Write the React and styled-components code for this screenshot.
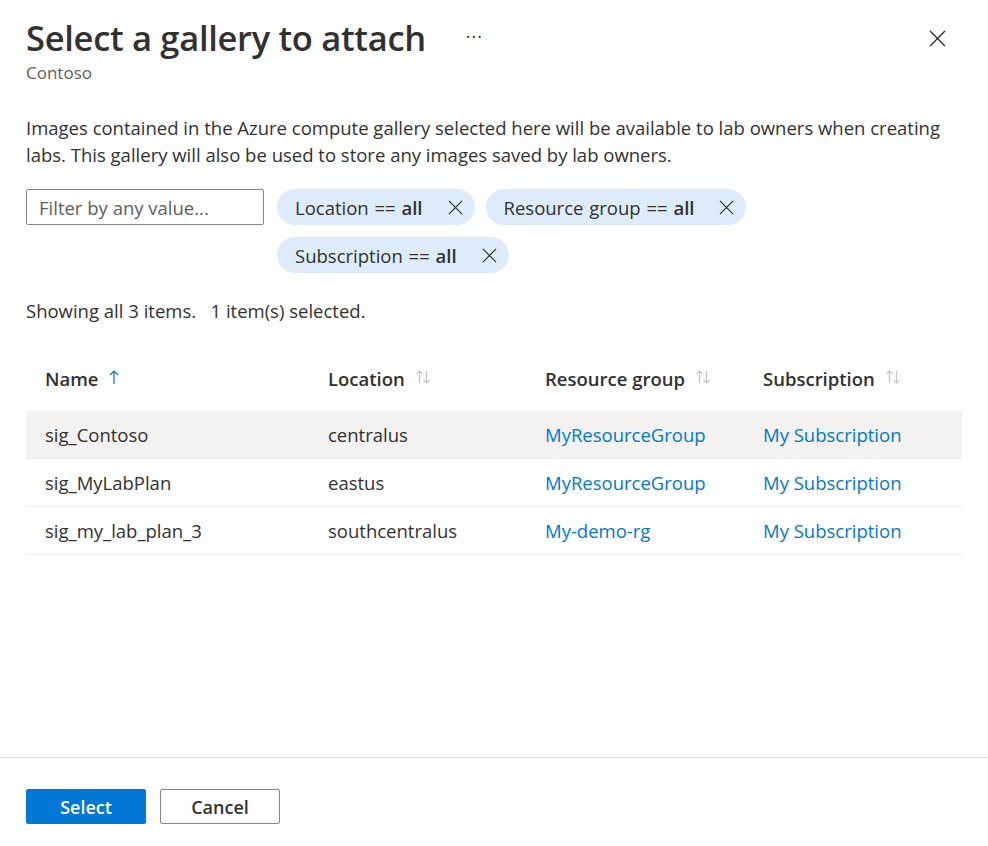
import React from 'react';
import styled, { createGlobalStyle } from 'styled-components';

const GlobalStyle = createGlobalStyle`
	html, body {
		margin: 0;
		padding: 0;
		background: #ffffff;
	}
	body {
		font-family: 'Open Sans', 'Noto Sans', sans-serif;
		color: #323130;
	}
	* {
		box-sizing: border-box;
	}
`;

const filters = [
	{ label: 'Location', value: 'all' },
	{ label: 'Resource group', value: 'all' },
	{ label: 'Subscription', value: 'all' },
];

const columns = [
	{ key: 'name', title: 'Name', sorted: true },
	{ key: 'location', title: 'Location' },
	{ key: 'group', title: 'Resource group' },
	{ key: 'sub', title: 'Subscription' },
];

const rows = [
	{ name: 'sig_Contoso', location: 'centralus', group: 'MyResourceGroup', sub: 'My Subscription', selected: true },
	{ name: 'sig_MyLabPlan', location: 'eastus', group: 'MyResourceGroup', sub: 'My Subscription' },
	{ name: 'sig_my_lab_plan_3', location: 'southcentralus', group: 'My-demo-rg', sub: 'My Subscription' },
];

const CloseIcon = ({ size = 16 }) => (
	<svg width={size} height={size} viewBox='0 0 16 16' fill='none'>
		<path d='M1 1L15 15M15 1L1 15' stroke='currentColor' strokeWidth='1.3' />
	</svg>
);

const SortUp = () => (
	<svg width='10' height='16' viewBox='0 0 10 16' fill='none'>
		<path d='M5 15V2M1 6L5 2L9 6' stroke='#0078d4' strokeWidth='1.2' />
	</svg>
);

const SortBoth = () => (
	<svg width='16' height='16' viewBox='0 0 16 16' fill='none'>
		<path d='M4.5 14V2M1.5 5L4.5 2L7.5 5' stroke='#c8c6c4' strokeWidth='1.2' />
		<path d='M11.5 2V14M8.5 11L11.5 14L14.5 11' stroke='#c8c6c4' strokeWidth='1.2' />
	</svg>
);

const App = () => {
	return (
		<>
			<GlobalStyle />
			<Panel>
				<Header>
					<TitleRow>
						<Title>Select a gallery to attach</Title>
						<More>&middot;&middot;&middot;</More>
						<CloseBtn type='button' aria-label='Close'>
							<CloseIcon size={17} />
						</CloseBtn>
					</TitleRow>
					<Subtitle>Contoso</Subtitle>
				</Header>
				<Body>
					<Description>
						Images contained in the Azure compute gallery selected here will be available to lab owners when creating
						labs. This gallery will also be used to store any images saved by lab owners.
					</Description>
					<FilterBar>
						<FilterInput placeholder='Filter by any value...' />
						<Pills>
							{filters.map((f) => (
								<Pill key={f.label}>
									<span>
										{f.label} == <b>{f.value}</b>
									</span>
									<PillClose>
										<CloseIcon size={15} />
									</PillClose>
								</Pill>
							))}
						</Pills>
					</FilterBar>
					<Summary>Showing all 3 items.&nbsp;&nbsp; 1 item(s) selected.</Summary>
					<Table>
						<HeadRow>
							{columns.map((c) => (
								<HeadCell key={c.key}>
									{c.title}
									<SortSlot>{c.sorted ? <SortUp /> : <SortBoth />}</SortSlot>
								</HeadCell>
							))}
						</HeadRow>
						{rows.map((r) => (
							<Row key={r.name} selected={r.selected}>
								<Cell>{r.name}</Cell>
								<Cell>{r.location}</Cell>
								<Cell link>{r.group}</Cell>
								<Cell link>{r.sub}</Cell>
							</Row>
						))}
					</Table>
				</Body>
				<Footer>
					<Button primary type='button'>Select</Button>
					<Button type='button'>Cancel</Button>
				</Footer>
			</Panel>
		</>
	);
};

const Panel = styled.div`
	display: flex;
	flex-direction: column;
	height: 846px;
	width: 988px;
`;

const Header = styled.div`
	padding: 16px 26px 0 26px;
`;

const TitleRow = styled.div`
	display: flex;
	align-items: center;
	height: 44px;
`;

const Title = styled.h1`
	margin: 0;
	font-size: 34.5px;
	font-weight: 600;
	line-height: 44px;
	color: #323130;
	letter-spacing: -0.3px;
`;

const More = styled.span`
	margin-left: 40px;
	font-size: 18px;
	color: #323130;
	letter-spacing: 1px;
	margin-top: -4px;
`;

const CloseBtn = styled.button`
	margin-left: auto;
	margin-right: 16px;
	background: transparent;
	border: none;
	padding: 0;
	color: #323130;
	display: flex;
	cursor: pointer;
`;

const Subtitle = styled.div`
	font-size: 17px;
	color: #605e5c;
	margin-top: 2px;
	line-height: 22px;
`;

const Body = styled.div`
	flex: 1;
	padding: 30px 26px 0 26px;
`;

const Description = styled.p`
	margin: 0;
	font-size: 18.5px;
	line-height: 27px;
	color: #323130;
`;

const FilterBar = styled.div`
	display: flex;
	align-items: flex-start;
	gap: 13px;
	margin-top: 21px;
`;

const FilterInput = styled.input`
	width: 238px;
	height: 36px;
	border: 1px solid #8a8886;
	border-radius: 2px;
	padding: 0 12px;
	font-family: inherit;
	font-size: 18.5px;
	color: #323130;
	flex-shrink: 0;
	&::placeholder {
		color: #605e5c;
	}
`;

const Pills = styled.div`
	display: flex;
	flex-wrap: wrap;
	gap: 12px 11px;
	width: 490px;
`;

const Pill = styled.div`
	display: flex;
	align-items: center;
	height: 36px;
	padding: 0 12px 0 18px;
	border-radius: 18px;
	background: #deecf9;
	font-size: 18.5px;
	color: #323130;
	word-spacing: 1px;
	b {
		font-weight: 600;
	}
`;

const PillClose = styled.span`
	display: flex;
	margin-left: 25px;
	color: #323130;
`;

const Summary = styled.div`
	margin-top: 26px;
	font-size: 18.5px;
	line-height: 24px;
	color: #323130;
`;

const Table = styled.div`
	margin-top: 24px;
	width: 936px;
`;

const grid = `
	display: grid;
	grid-template-columns: 283px 217px 218px 1fr;
`;

const HeadRow = styled.div`
	${grid}
	height: 64px;
	padding-bottom: 2px;
	align-items: center;
`;

const HeadCell = styled.div`
	display: flex;
	align-items: center;
	padding-left: 19px;
	font-size: 18.5px;
	font-weight: 600;
	color: #323130;
`;

const SortSlot = styled.span`
	display: flex;
	margin-left: 10px;
	margin-top: -2px;
`;

const Row = styled.div`
	${grid}
	height: 48px;
	align-items: center;
	border-bottom: 1px solid #edebe9;
	background: ${(p) => (p.selected ? '#f3f2f1' : '#ffffff')};
`;

const Cell = styled.div`
	padding-left: 19px;
	font-size: 18.5px;
	color: ${(p) => (p.link ? '#0078d4' : '#323130')};
	white-space: nowrap;
`;

const Footer = styled.div`
	display: flex;
	gap: 14px;
	border-top: 1px solid #e1dfdd;
	padding: 31px 26px 22px 26px;
	height: 89px;
`;

const Button = styled.button`
	width: 120px;
	height: 35px;
	border-radius: 2px;
	font-family: inherit;
	font-size: 18px;
	font-weight: 600;
	cursor: pointer;
	border: 1px solid ${(p) => (p.primary ? '#0078d4' : '#8a8886')};
	background: ${(p) => (p.primary ? '#0078d4' : '#ffffff')};
	color: ${(p) => (p.primary ? '#ffffff' : '#323130')};
`;

export default App;
